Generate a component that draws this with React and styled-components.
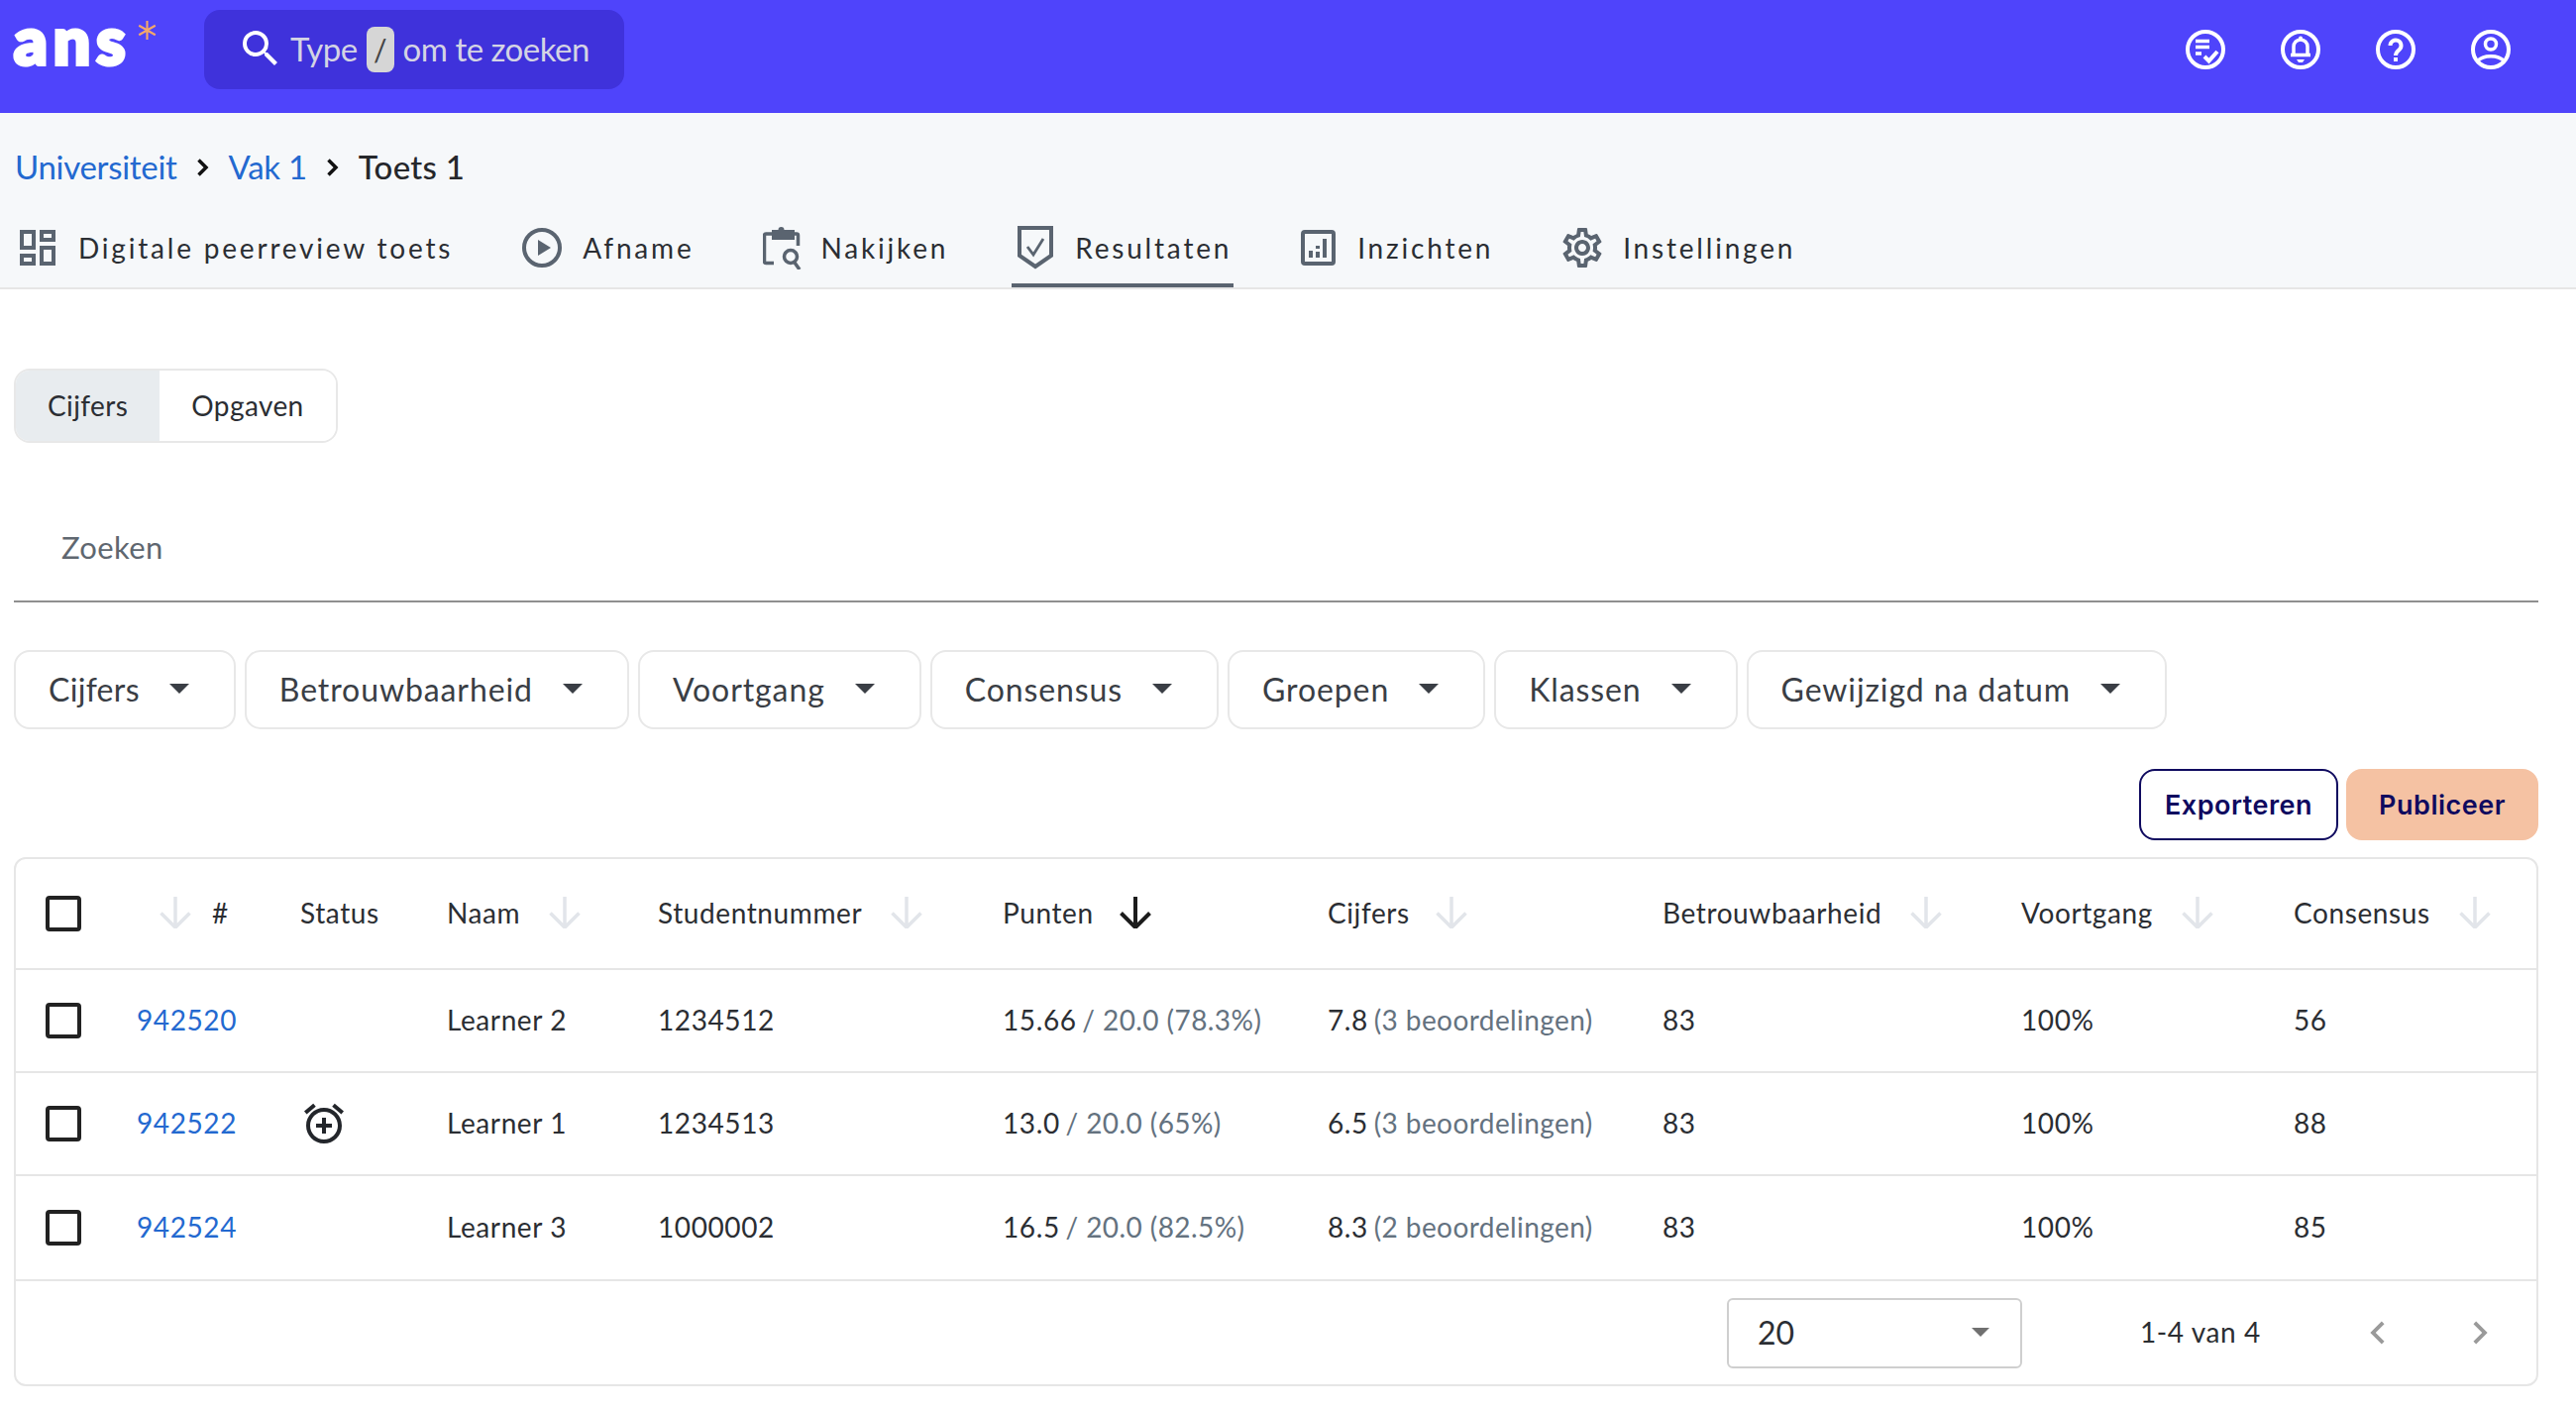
import React from 'react'
import styled, { createGlobalStyle } from 'styled-components'
import { MdSearch, MdChevronRight, MdChevronLeft, MdOutlineSettings, MdOutlineDashboard, MdAlarmAdd } from 'react-icons/md'

const GlobalStyle = createGlobalStyle`
  * { box-sizing: border-box; }
  body {
    margin: 0;
    background: #fff;
    font-family: Lato, "Noto Sans", sans-serif;
    color: #2b2e33;
  }
`

const Header = styled.header`
  height: 114px;
  background: #4f44fb;
  padding: 10px 66px 0 14px;
  display: flex;
  align-items: flex-start;
`

const Logo = styled.div`
  width: 192px;
  height: 80px;
  display: flex;
  align-items: flex-start;
  color: #fff;
  font-weight: 900;
  font-size: 66px;
  line-height: 59px;
  letter-spacing: 6px;
  -webkit-text-stroke: 4px #fff;
`

const Asterisk = styled.svg`
  width: 19px;
  height: 19px;
  margin: 11px 0 0 7px;
`

const SearchBox = styled.div`
  width: 424px;
  height: 80px;
  border-radius: 16px;
  background: #3f32db;
  padding: 0 0 2px 33px;
  display: flex;
  align-items: center;
  color: #d4d4e4;
  font-size: 33px;
  letter-spacing: -0.5px;

  svg {
    color: #fff;
    margin-right: 6px;
  }
`

const KeyHint = styled.span`
  width: 28px;
  height: 46px;
  margin: 2px 9px 0;
  border-radius: 8px;
  background: #d6d6d6;
  color: #444;
  display: flex;
  align-items: center;
  justify-content: center;
  font-size: 30px;
`

const HeaderIcons = styled.div`
  margin-left: auto;
  height: 80px;
  display: flex;
  align-items: center;
  gap: 56px;
`

const SubNav = styled.div`
  height: 178px;
  background: #f6f8fa;
  border-bottom: 2px solid #e6e6e6;
`

const Breadcrumbs = styled.nav`
  padding: 34px 0 0 15px;
  height: 98px;
  display: flex;
  align-items: flex-start;
  font-size: 33px;
  line-height: 40px;
  letter-spacing: -0.3px;
`

const Crumb = styled.a`
  color: ${(p) => (p.$current ? '#25272b' : '#2369d0')};
  font-weight: ${(p) => (p.$current ? 500 : 400)};
  letter-spacing: ${(p) => (p.$current ? '0.3px' : 'inherit')};
`

const CrumbSep = styled.svg`
  width: 36px;
  height: 36px;
  margin: 3px 8px 0;
  fill: none;
  stroke: #111;
  stroke-width: 3.5;
`

const Tabs = styled.div`
  padding-left: 14px;
  display: flex;
  gap: 62px;
`

const Tab = styled.div`
  height: 78px;
  padding: 2px 2px 0 6px;
  display: flex;
  align-items: center;
  gap: ${(p) => p.$gap || 21}px;
  font-size: 28px;
  letter-spacing: 2.8px;
  color: #2b2e33;
  border-bottom: 4px solid ${(p) => (p.$active ? '#5a6470' : 'transparent')};
  svg { flex-shrink: 0; color: #5a6470; }
`

const Main = styled.main`
  padding: 80px 38px 0 14px;
`

const Toggle = styled.div`
  display: inline-flex;
  height: 75px;
  border: 2px solid #e8e8e8;
  border-radius: 16px;
  overflow: hidden;
  vertical-align: top;
`

const ToggleItem = styled.div`
  padding: 0 32px 1px;
  display: flex;
  align-items: center;
  font-size: 28px;
  letter-spacing: 0.4px;
  background: ${(p) => (p.$active ? '#e8ecef' : '#fff')};
  color: #2b2e33;
`

const SearchField = styled.div`
  margin-top: 71px;
  height: 90px;
  padding: 0 0 20px 48px;
  border-bottom: 2px solid #8f8f8f;
  display: flex;
  align-items: center;
  font-size: 31px;
  letter-spacing: 0.4px;
  color: #5f6770;
`

const Filters = styled.div`
  margin-top: 48px;
  display: flex;
  gap: 9px;
`

const FilterButton = styled.div`
  height: 80px;
  padding: 0 45px 2px 33px;
  display: flex;
  align-items: center;
  gap: 30px;
  border: 2px solid #e8e8e8;
  border-radius: 16px;
  font-size: 32px;
  letter-spacing: 0.9px;
  color: #3a3e45;

  &:first-child {
    letter-spacing: 0.3px;
  }
`

const Caret = styled.span`
  width: 0;
  height: 0;
  border-left: ${(p) => p.$size || 10}px solid transparent;
  border-right: ${(p) => p.$size || 10}px solid transparent;
  border-top: ${(p) => p.$size || 10}px solid ${(p) => p.$color || '#3a3e45'};
`

const Actions = styled.div`
  margin-top: 40px;
  display: flex;
  justify-content: flex-end;
  gap: 8px;
`

const ActionButton = styled.button`
  height: 72px;
  width: ${(p) => p.$width}px;
  padding: 0;
  border: 2px solid ${(p) => (p.$primary ? '#f5c2a3' : '#0f0a5f')};
  border-radius: 16px;
  background: ${(p) => (p.$primary ? '#f5c2a3' : '#fff')};
  color: #0f0a5f;
  font-family: Inter, sans-serif;
  font-size: 27px;
  letter-spacing: 0.5px;
  font-weight: 600;
`

const Table = styled.div`
  margin-top: 17px;
  border: 2px solid #e6e6e6;
  border-radius: 12px;
  font-size: 28px;
  letter-spacing: 0.6px;
`

const Row = styled.div`
  height: ${(p) => p.$height}px;
  padding: 0 0 2px 30px;
  display: grid;
  grid-template-columns: 92px 165px 148px 213px 348px 328px 338px 362px 275px 1fr;
  align-items: center;
  border-bottom: 2px solid #e6e6e6;
  color: #2b2e33;
`

const HeadCell = styled.div`
  display: flex;
  align-items: center;
  gap: ${(p) => p.$gap || 29}px;
  padding-left: ${(p) => p.$indent || 0}px;
`

const Checkbox = styled.span`
  display: block;
  width: 36px;
  height: 36px;
  margin-top: 2px;
  border: 4.5px solid #222;
  border-radius: 4px;
`

const IdLink = styled.a`
  color: #2369d0;
`

const StatusIcon = styled(MdAlarmAdd)`
  display: block;
  margin-top: 2px;
  color: #23262b;
`

const Muted = styled.span`
  color: #64727f;
  letter-spacing: 0.42px;
  margin-left: -2px;
`

const Pager = styled.div`
  height: 104px;
  display: flex;
  align-items: center;
  padding-left: 1727px;
  & > * { flex-shrink: 0; }
`

const PageSelect = styled.div`
  width: 298px;
  height: 71px;
  padding: 0 31px 2px 29px;
  border: 2px solid #cfcfcf;
  border-radius: 6px;
  display: flex;
  align-items: center;
  justify-content: space-between;
  font-size: 32px;
  letter-spacing: 0;
`

const PageCount = styled.span`
  margin-left: 119px;
  padding-bottom: 2px;
  width: 217px;
`

const PageArrow = styled.span`
  display: flex;
  width: 103px;
  color: #9a9a9a;
`

const SortArrow = ({ active }) => (
  <svg width="32" height="32" viewBox="0 0 32 32" fill="none" stroke={active ? '#1c1c1c' : '#e2e5ea'} strokeWidth={active ? 4 : 3.5}>
    <path d="M16 0v31M1.500 16.500L16 31l14.500-14.500" />
  </svg>
)

const Chevron = () => (
  <CrumbSep viewBox="0 0 36 36">
    <path d="M13.500 10.500l7.500 7.500-7.500 7.500" />
  </CrumbSep>
)

const TopIcon = ({ children }) => (
  <svg width="40" height="40" viewBox="0 0 40 40" fill="none" stroke="#fff" strokeWidth="3.5">
    <circle cx="20" cy="20" r="18" strokeWidth="4" />
    {children}
  </svg>
)

const TAB_STROKE = { fill: 'none', stroke: 'currentColor' }

const PlayIcon = () => (
  <svg width="40" height="40" viewBox="0 0 40 40">
    <circle cx="20" cy="20" r="18" strokeWidth="4" {...TAB_STROKE} />
    <path d="M16 12l13 8-13 8z" fill="currentColor" />
  </svg>
)

const ReviewIcon = () => (
  <svg width="41" height="44" viewBox="0 0 41 44" {...TAB_STROKE}>
    <path d="M9 8H3a1.500 1.500 0 0 0-1.500 1.500V36a1.500 1.500 0 0 0 1.500 1.500h8M31 8h3a1.500 1.500 0 0 1 1.500 1.500V20" strokeWidth="3.500" />
    <path d="M9 4h6.500a3 3 0 0 1 6 0H32v10H9z" fill="currentColor" stroke="none" />
    <circle cx="28" cy="31" r="6.500" strokeWidth="3.500" />
    <path d="M32 37l5 7" strokeWidth="3.500" />
  </svg>
)

const ResultIcon = () => (
  <svg width="36" height="44" viewBox="0 0 36 44" {...TAB_STROKE}>
    <path d="M2 2h32v28L18 41 2 30z" strokeWidth="4" />
    <path d="M10 21l6 8 10-16" strokeWidth="2.800" />
  </svg>
)

const InsightIcon = () => (
  <svg width="35" height="36" viewBox="0 0 35 36">
    <rect x="2" y="2" width="31" height="32" rx="2" strokeWidth="4" {...TAB_STROKE} />
    <path d="M8 21h4v7H8zM15 16h4v3h-4zM15 22h4v6h-4zM22 9h4v19h-4z" fill="currentColor" />
  </svg>
)

const rows = [
  { id: '942520', name: 'Learner 2', nr: '1234512', points: '15.66', rest: '/ 20.0 (78.3%)', grade: '7.8', reviews: '(3 beoordelingen)', cons: '56' },
  { id: '942522', name: 'Learner 1', nr: '1234513', points: '13.0', rest: '/ 20.0 (65%)', grade: '6.5', reviews: '(3 beoordelingen)', cons: '88', late: true },
  { id: '942524', name: 'Learner 3', nr: '1000002', points: '16.5', rest: '/ 20.0 (82.5%)', grade: '8.3', reviews: '(2 beoordelingen)', cons: '85', tall: true },
]

const filters = ['Cijfers', 'Betrouwbaarheid', 'Voortgang', 'Consensus', 'Groepen', 'Klassen', 'Gewijzigd na datum']

export default function App() {
  return (
    <>
      <GlobalStyle />
      <Header>
        <Logo>
          ans
          <Asterisk viewBox="0 0 20 20" stroke="#f4a86a" strokeWidth="2.200">
            <path d="M10 0v20M1.300 5l17.400 10M1.300 15l17.400-10" />
          </Asterisk>
        </Logo>
        <SearchBox>
          <MdSearch size={48} />
          Type
          <KeyHint>/</KeyHint>
          om te zoeken
        </SearchBox>
        <HeaderIcons>
          <TopIcon>
            <path d="M10 11.500h14M10 17.500h14M10 24h6" />
            <path d="M19 27l4.500 4.500L32 22" strokeWidth="4" />
          </TopIcon>
          <TopIcon>
            <path d="M13 25v-8a7 7 0 0 1 14 0v8M10 25.500h20" />
            <circle cx="20" cy="8.500" r="2" fill="#fff" stroke="none" />
            <path d="M16 30h8l-2 3h-4z" fill="#fff" stroke="none" />
          </TopIcon>
          <TopIcon>
            <path d="M14.500 16a5.500 5.500 0 1 1 9 4.200C21.500 21.800 20 23 20 26" strokeWidth="4" />
            <path d="M18 28h4v4h-4z" fill="#fff" stroke="none" />
          </TopIcon>
          <TopIcon>
            <circle cx="20" cy="14.500" r="5.500" />
            <path d="M6.500 32C12 25 28 25 33.500 32" />
          </TopIcon>
        </HeaderIcons>
      </Header>

      <SubNav>
        <Breadcrumbs>
          <Crumb>Universiteit</Crumb>
          <Chevron />
          <Crumb>Vak 1</Crumb>
          <Chevron />
          <Crumb $current>Toets 1</Crumb>
        </Breadcrumbs>
        <Tabs>
          <Tab $gap={23}><MdOutlineDashboard size={48} style={{ margin: '-6px' }} />Digitale peerreview toets</Tab>
          <Tab><PlayIcon />Afname</Tab>
          <Tab $gap={17}><ReviewIcon />Nakijken</Tab>
          <Tab $gap={22} $active><ResultIcon />Resultaten</Tab>
          <Tab $gap={22}><InsightIcon />Inzichten</Tab>
          <Tab><MdOutlineSettings size={48} style={{ margin: '-4px' }} />Instellingen</Tab>
        </Tabs>
      </SubNav>

      <Main>
        <Toggle>
          <ToggleItem $active>Cijfers</ToggleItem>
          <ToggleItem>Opgaven</ToggleItem>
        </Toggle>
        <SearchField>Zoeken</SearchField>
        <Filters>
          {filters.map((f) => (
            <FilterButton key={f}>{f}<Caret /></FilterButton>
          ))}
        </Filters>
        <Actions>
          <ActionButton $width={201}>Exporteren</ActionButton>
          <ActionButton $width={194} $primary>Publiceer</ActionButton>
        </Actions>
        <Table>
          <Row $height={112}>
            <Checkbox />
            <HeadCell $indent={23} $gap={21}><SortArrow />#</HeadCell>
            <HeadCell>Status</HeadCell>
            <HeadCell>Naam<SortArrow /></HeadCell>
            <HeadCell>Studentnummer<SortArrow /></HeadCell>
            <HeadCell $gap={26}>Punten<SortArrow active /></HeadCell>
            <HeadCell $gap={26}>Cijfers<SortArrow /></HeadCell>
            <HeadCell>Betrouwbaarheid<SortArrow /></HeadCell>
            <HeadCell>Voortgang<SortArrow /></HeadCell>
            <HeadCell>Consensus<SortArrow /></HeadCell>
          </Row>
          {rows.map((r) => (
            <Row key={r.id} $height={r.tall ? 106 : 104}>
              <Checkbox />
              <IdLink>{r.id}</IdLink>
              <div>{r.late && <StatusIcon size={48} />}</div>
              <div>{r.name}</div>
              <div>{r.nr}</div>
              <div>{r.points} <Muted>{r.rest}</Muted></div>
              <div>{r.grade} <Muted>{r.reviews}</Muted></div>
              <div>83</div>
              <div>100%</div>
              <div>{r.cons}</div>
            </Row>
          ))}
          <Pager>
            <PageSelect>20<Caret $size={9} $color="#707070" /></PageSelect>
            <PageCount>1-4 van 4</PageCount>
            <PageArrow><MdChevronLeft size={46} /></PageArrow>
            <PageArrow><MdChevronRight size={46} /></PageArrow>
          </Pager>
        </Table>
      </Main>
    </>
  )
}
